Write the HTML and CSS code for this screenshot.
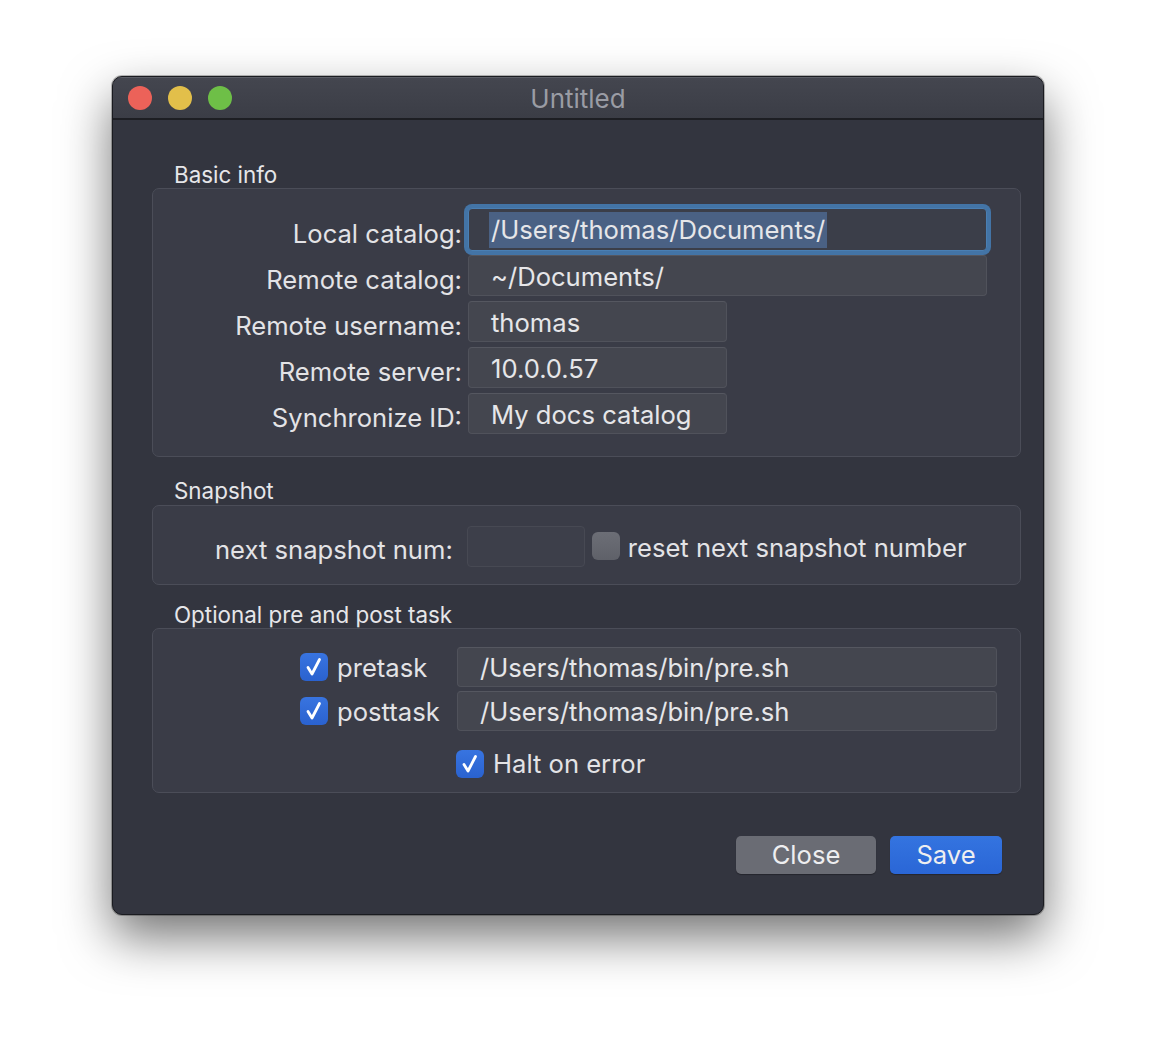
FILE: index.html
```html
<!DOCTYPE html>
<html>
<head>
<meta charset="utf-8">
<title>Untitled</title>
<link rel="stylesheet" href="styles.css">
</head>
<body>
<div class="window">
  <div class="titlebar">
    <div class="lights">
      <span class="light red"></span>
      <span class="light yellow"></span>
      <span class="light green"></span>
    </div>
    <div class="title">Untitled</div>
  </div>
  <div class="content">
    <div class="group-label">Basic info</div>
    <div class="box basic">
      <div class="form-row">
        <div class="label">Local catalog:</div>
        <div class="field wide focused"><span class="sel">/Users/thomas/Documents/</span></div>
      </div>
      <div class="form-row">
        <div class="label">Remote catalog:</div>
        <div class="field wide">~/Documents/</div>
      </div>
      <div class="form-row">
        <div class="label">Remote username:</div>
        <div class="field narrow">thomas</div>
      </div>
      <div class="form-row">
        <div class="label">Remote server:</div>
        <div class="field narrow">10.0.0.57</div>
      </div>
      <div class="form-row">
        <div class="label">Synchronize ID:</div>
        <div class="field narrow">My docs catalog</div>
      </div>
    </div>

    <div class="group-label snap-label">Snapshot</div>
    <div class="box snapshot">
      <div class="snap-text">next snapshot num:</div>
      <div class="field small"></div>
      <span class="check off"></span>
      <div class="snap-check-label">reset next snapshot number</div>
    </div>

    <div class="group-label opt-label">Optional pre and post task</div>
    <div class="box optional">
      <div class="task-row">
        <div class="task-check">
          <span class="check on"><svg viewBox="0 0 28 28" width="28" height="28"><path d="M8 14.5 L12 21 L19.5 6.5" fill="none" stroke="#fff" stroke-width="2.8" stroke-linecap="round" stroke-linejoin="round"/></svg></span>
          <span class="task-name">pretask</span>
        </div>
        <div class="field task">/Users/thomas/bin/pre.sh</div>
      </div>
      <div class="task-row">
        <div class="task-check">
          <span class="check on"><svg viewBox="0 0 28 28" width="28" height="28"><path d="M8 14.5 L12 21 L19.5 6.5" fill="none" stroke="#fff" stroke-width="2.8" stroke-linecap="round" stroke-linejoin="round"/></svg></span>
          <span class="task-name">posttask</span>
        </div>
        <div class="field task">/Users/thomas/bin/pre.sh</div>
      </div>
      <div class="halt-row">
        <span class="check on"><svg viewBox="0 0 28 28" width="28" height="28"><path d="M8 14.5 L12 21 L19.5 6.5" fill="none" stroke="#fff" stroke-width="2.8" stroke-linecap="round" stroke-linejoin="round"/></svg></span>
        <span class="halt-text">Halt on error</span>
      </div>
    </div>

    <div class="buttons">
      <div class="btn close">Close</div>
      <div class="btn save">Save</div>
    </div>
  </div>
</div>
</body>
</html>
```

FILE: styles.css
```css
* { box-sizing: border-box; }
html, body { margin: 0; padding: 0; }
body {
  background: #ffffff;
  width: 1156px;
  height: 1064px;
  overflow: hidden;
  font-family: "Inter", "Liberation Sans", sans-serif;
  color: #e3e3e6;
}
.window {
  margin: 76px 0 0 112px;
  width: 932px;
  height: 839px;
  border-radius: 10px;
  background: #33353f;
  border: 1px solid #1a1b20;
  box-shadow: 0 22px 50px rgba(0,0,0,0.55), 0 0 0 1px rgba(0,0,0,0.25);
  overflow: hidden;
  display: flex;
  flex-direction: column;
}
.titlebar {
  height: 43px;
  flex: none;
  background: linear-gradient(#44464f, #3b3d46);
  border-bottom: 2px solid #1d1e23;
  position: relative;
  display: flex;
  align-items: center;
  box-shadow: inset 0 1px 0 rgba(255,255,255,0.12);
}
.lights {
  display: flex;
  gap: 16px;
  padding-left: 15px;
}
.light {
  width: 24px;
  height: 24px;
  border-radius: 50%;
  display: block;
}
.red { background: #ec6259; }
.yellow { background: #e2bf4a; }
.green { background: #6ebf47; }
.title {
  position: absolute;
  left: 0;
  right: 0;
  top: 0;
  bottom: 0;
  display: flex;
  align-items: center;
  justify-content: center;
  font-size: 26px;
  color: #9a9ca4;
  padding-top: 1px;
}
.content {
  padding: 40px 22px 0 39px;
  display: flex;
  flex-direction: column;
  flex: 1;
}
.group-label {
  font-size: 22.4px;
  line-height: 30px;
  height: 26px;
  padding-left: 22px;
  color: #e6e6e9;
  margin-bottom: 2px;
  white-space: nowrap;
}
.snap-label { margin-top: 19px; margin-bottom: 3px; }
.opt-label { margin-top: 15px; margin-bottom: 2px; }
.box {
  background: #3a3c47;
  border: 1.5px solid #4b4d58;
  border-radius: 7px;
}
.basic {
  height: 269px;
  padding-top: 20px;
  display: flex;
  flex-direction: column;
  gap: 5px;
}
.form-row {
  display: flex;
  align-items: center;
  height: 41px;
}
.label {
  width: 315px;
  text-align: right;
  font-size: 25.6px;
  padding-right: 6px;
  padding-top: 8px;
  color: #e3e3e6;
  white-space: nowrap;
}
.field {
  height: 41px;
  background: #44464f;
  border: 1px solid #50525b;
  border-top-color: #555760;
  border-radius: 4px;
  font-size: 25.6px;
  line-height: 41px;
  padding-left: 22px;
  color: #e6e6e9;
  white-space: nowrap;
}
.wide { width: 519px; }
.narrow { width: 259px; }
.focused {
  height: 43px;
  line-height: 41px;
  box-shadow: 0 0 0 4px #4374a6;
  border-color: #4a7fb3;
  background: #3b3e49;
}
.sel {
  background: #4a6184;
  padding: 2px 2px 3px 2px;
  margin-left: -2px;
}
.snapshot {
  height: 80px;
  display: flex;
  align-items: center;
  padding-left: 62px;
}
.snap-text {
  font-size: 25.6px;
  padding-top: 8px;
  white-space: nowrap;
}
.field.small {
  width: 118px;
  margin-left: 14px;
  background: #3d3f4a;
  border-color: #474953;
  margin-top: 2px;
}
.check {
  width: 28px;
  height: 28px;
  border-radius: 6px;
  display: block;
  flex: none;
}
.check svg { display: block; }
.check.off {
  background: linear-gradient(#6c6e76, #5f6169);
  margin-left: 7px;
  margin-right: 8px;
  margin-top: 2px;
}
.check.on {
  background: linear-gradient(#3874e0, #2a62cf);
}
.snap-check-label {
  font-size: 25.6px;
  padding-top: 4px;
  white-space: nowrap;
}
.optional {
  height: 165px;
  padding-top: 18px;
  display: flex;
  flex-direction: column;
}
.task-row {
  display: flex;
  align-items: center;
  height: 40px;
  margin-bottom: 4px;
}
.task-check {
  width: 304px;
  padding-left: 147px;
  display: flex;
  align-items: center;
  gap: 9px;
}
.task-name {
  font-size: 25.6px;
  white-space: nowrap;
}
.field.task {
  width: 540px;
  height: 40px;
  padding-left: 22px;
  line-height: 40px;
}
.halt-row {
  display: flex;
  align-items: center;
  padding-left: 303px;
  margin-top: 13px;
  gap: 9px;
}
.halt-text {
  font-size: 25.6px;
}
.buttons {
  display: flex;
  justify-content: flex-end;
  gap: 14px;
  margin-top: 43px;
  padding-right: 19px;
}
.btn {
  height: 38px;
  border-radius: 5px;
  font-size: 25.6px;
  line-height: 38px;
  text-align: center;
  color: #eeeef0;
}
.btn.close {
  width: 140px;
  background: #6a6c74;
  box-shadow: 0 1px 1px rgba(0,0,0,0.3);
}
.btn.save {
  width: 112px;
  background: linear-gradient(#3474e0, #2a66d6);
  box-shadow: 0 1px 1px rgba(0,0,0,0.3);
}
```
